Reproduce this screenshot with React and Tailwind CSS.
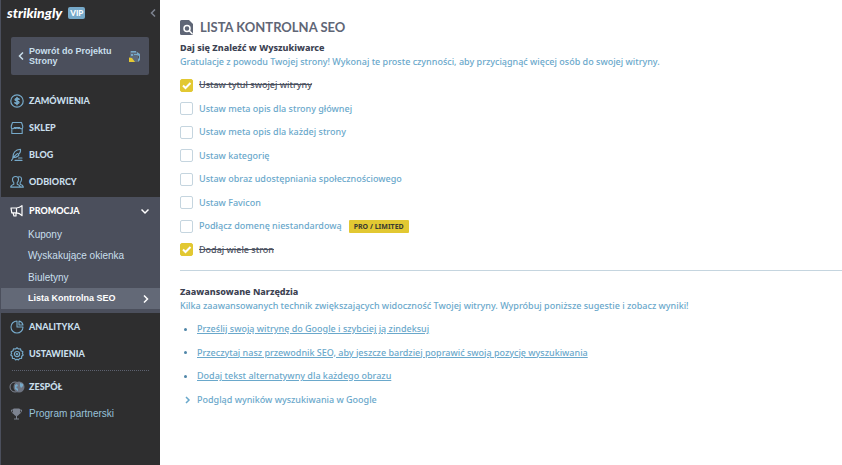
import React, { useState } from 'react';

const svgProps = {
  width: 14,
  height: 14,
  viewBox: '0 0 14 14',
  fill: 'none',
  stroke: 'currentColor',
  strokeWidth: 1.1,
  strokeLinecap: 'round',
  strokeLinejoin: 'round',
  'aria-hidden': true,
};

const icons = {
  orders: (
    <svg {...svgProps}>
      <circle cx="7" cy="7" r="6.2" strokeWidth="1.2" />
      <path d="M9 5.2C8.4 4.3 5.4 4.2 5.2 5.6 5 7.2 9 6.7 8.9 8.4 8.7 9.8 5.6 9.7 5 8.8M7 3.6v6.8" strokeWidth="1.7" />
    </svg>
  ),
  store: (
    <svg {...svgProps}>
      <path d="M2.5 1.5h9L12.7 5v1.5c0 .8-.7 1.3-1.5 1.3s-1.500-.5-1.500-1.300H4.300c0 .8-.7 1.300-1.500 1.300s-1.500-.5-1.500-1.300V5zM4.300 6.500c.6 1.300 2 1.300 2.700.2.700 1.100 2.100 1.100 2.700-.2M1.800 8v4.500h10.400V8" />
    </svg>
  ),
  blog: (
    <svg {...svgProps}>
      <path d="M1.500 12.500C2.500 10 4.500 7.500 7.500 5.500M2.800 9.800C2.800 5 5.500 1.800 10.500 1.300c.3 2.400-.4 4-2 5l.3 1.200C7 9.200 5 9.800 2.800 9.800zM5 12.400h7M8.500 10h3.500" />
    </svg>
  ),
  audience: (
    <svg {...svgProps}>
      <path d="M8.300 2c1.900-.9 3.500.4 3.200 2.600-.1 1.400-.7 2.300-1.300 2.800v1.800c1.900.6 3 1.200 3.200 2.900h-3M5.600 1.500c2 0 3 1.300 2.900 3.100-.1 1.500-.6 2.400-1.300 3v1.600c1.800.6 3 1.100 3.100 2.900H.7c.1-1.800 1.300-2.300 3.100-2.900V7.600c-.7-.6-1.200-1.500-1.300-3-.1-1.800 1.100-3.100 3.100-3.100z" />
    </svg>
  ),
  promotion: (
    <svg {...svgProps} strokeWidth="1.2">
      <path d="M1 4h5.500c2 0 4-.8 5.500-2.300v10C10.500 10 8.500 8.800 6.500 8.800H1.800zM6.500 4v4.800M3 8.800l1 3.200h2V8.800" />
    </svg>
  ),
  analytics: (
    <svg {...svgProps}>
      <path d="M7 1a6 6 0 1 0 6 6H7zM9 1v4h4A5 5 0 0 0 9 1z" />
    </svg>
  ),
  settings: (
    <svg {...svgProps} strokeWidth="1.2">
      <path d="M7 .8l1.500 1.200 2-.2.500 2 1.900.9-.5 1.800.8 1.500-1.500 1.300-.1 2-2 .2L8.400 13 7 12.300 5.600 13l-1.200-1.500-2-.2-.1-2L.8 8l.8-1.500-.5-1.800L3 3.800l.5-2 2 .2z" />
      <circle cx="7" cy="7.100" r="2.600" />
      <circle cx="7" cy="7.100" r=".5" />
    </svg>
  ),
};

const seoTasks = [
  { id: 'title', label: 'Ustaw tytuł swojej witryny', done: true },
  { id: 'meta-home', label: 'Ustaw meta opis dla strony głównej' },
  { id: 'meta-pages', label: 'Ustaw meta opis dla każdej strony' },
  { id: 'category', label: 'Ustaw kategorię' },
  { id: 'share-image', label: 'Ustaw obraz udostępniania społecznościowego' },
  { id: 'favicon', label: 'Ustaw Favicon' },
  { id: 'domain', label: 'Podłącz domenę niestandardową', badge: 'PRO / LIMITED' },
  { id: 'pages', label: 'Dodaj wiele stron', done: true },
];

const advancedLinks = [
  'Prześlij swoją witrynę do Google i szybciej ją zindeksuj',
  'Przeczytaj nasz przewodnik SEO, aby jeszcze bardziej poprawić swoją pozycję wyszukiwania',
  'Dodaj tekst alternatywny dla każdego obrazu',
];

function Chevron({ d, className }) {
  return (
    <svg className={className} width="8" height="8" viewBox="0 0 8 8" fill="none" stroke="currentColor" strokeWidth="1.5" aria-hidden="true">
      <path d={d} />
    </svg>
  );
}

function NavItem({ icon, children }) {
  return (
    <a href="#" className="flex h-[27px] items-center gap-[5px] pl-[9px] font-[Lato,sans-serif] text-[9px] font-black text-[#c9dfec]">
      <span className="text-[#76a9c9]">{icons[icon]}</span>
      {children}
    </a>
  );
}

function Sidebar() {
  return (
    <aside className="flex w-40 shrink-0 flex-col border-l border-[#4b4f5c] bg-[#2e2e2f] font-['Liberation_Sans',sans-serif] text-[10px]">
      <div className="flex h-[26px] items-center pl-[6px] pr-[3px]">
        <span className="font-[Lato,sans-serif] text-sm font-black italic text-white">strikingly</span>
        <span className="ml-[6px] rounded-[2px] bg-[#76a9c9] px-[2px] font-[Lato,sans-serif] text-[8px] font-black leading-[12px] text-white">VIP</span>
        <button type="button" aria-label="Zwiń menu" className="ml-auto text-[#7d8390]">
          <Chevron d="M6 0.500L2.500 4 6 7.500" />
        </button>
      </div>

      <a href="#" className="ml-[10px] mr-[11px] mt-[11px] flex h-[38px] items-center rounded-[2px] bg-[#4b4f5c] pl-[6px] pr-[8px] text-[9px] font-bold leading-[10px] text-[#c9dfec]">
        <Chevron d="M6 0.500L2.500 4 6 7.500" />
        <span className="ml-1 grow">Powrót do Projektu<br />Strony</span>
        <svg width="12" height="12" viewBox="0 0 12 12" aria-hidden="true">
          <path d="M1 1h6l2 2v9H1z" fill="#5d6b7c" />
          <path d="M2 1h5v1.500H2zM2 4h2v2H2zM5 4h3v1H5zM8 2l3 2v6l-2 2V9l1-1V6L8 5z" fill="#76a9c9" />
          <path d="M0 7.500l3 .5 3 4H0z" fill="#e5c933" />
        </svg>
      </a>

      <nav className="mt-3">
        <NavItem icon="orders">ZAMÓWIENIA</NavItem>
        <NavItem icon="store">SKLEP</NavItem>
        <NavItem icon="blog">BLOG</NavItem>
        <NavItem icon="audience">ODBIORCY</NavItem>
        <div className="mt-[2px] bg-[#4b4f5c] pb-1 text-[#c9dfec]">
          <button type="button" className="flex h-[27px] w-full items-center gap-[5px] pl-[9px] pr-[11px] font-[Lato,sans-serif] text-[9px] font-black text-white">
            {icons.promotion}
            PROMOCJA
            <Chevron className="ml-auto" d="M0.500 2.500L4 6 7.500 2.500" />
          </button>
          <a href="#" className="flex h-[21px] items-center pl-[27px]">Kupony</a>
          <a href="#" className="flex h-[21px] items-center pl-[27px]">Wyskakujące okienka</a>
          <a href="#" className="flex h-[22px] items-center pl-[27px]">Biuletyny</a>
          <a href="#" className="flex h-[21px] items-center justify-between bg-[#636977] pl-[27px] pr-[10px] text-[9px] font-bold text-white">
            Lista Kontrolna SEO
            <Chevron d="M2 0.500L5.500 4 2 7.500" />
          </a>
        </div>
        <NavItem icon="analytics">ANALITYKA</NavItem>
        <NavItem icon="settings">USTAWIENIA</NavItem>
        <hr className="mb-[2px] ml-[11px] mr-[11px] mt-[3px] border-dotted border-[#5d6270]" />
        <a href="#" className="flex h-[27px] items-center gap-1 pl-2 font-[Lato,sans-serif] text-[9px] font-black text-[#c9dfec]">
          <svg width="16" height="12" viewBox="0 0 16 12" aria-hidden="true">
            <circle cx="6" cy="6" r="5" fill="none" stroke="#7d8390" />
            <circle cx="10" cy="6" r="5.500" fill="#6d7380" />
            <path d="M6 4l2-1 1 2-2 1 2 2v2L6 8zM11 2l3 1v2l-2 2-1-2z" fill="#76a9c9" />
          </svg>
          ZESPÓŁ
        </a>
        <a href="#" className="flex h-[27px] items-center gap-[6px] pl-[9px] text-[#98c2da]">
          <svg width="13" height="12" viewBox="0 0 13 12" fill="none" stroke="#7d8390" aria-hidden="true">
            <path d="M3.500 1h6v3c0 2-1 3.500-3 3.500S3.500 6 3.500 4z" fill="#7d8390" />
            <path d="M3.500 2h-2c0 2 .5 3 2.500 3.500M9.500 2h2c0 2-.5 3-2.500 3.500M6.500 7.500V11M4 11h5" />
          </svg>
          Program partnerski
        </a>
      </nav>
    </aside>
  );
}

function TaskRow({ task, checked, onToggle }) {
  return (
    <li className="flex items-center odd:h-6 even:h-[23px]">
      <span className="relative flex size-[13px]">
        <input
          id={task.id}
          type="checkbox"
          checked={checked}
          onChange={onToggle}
          className="size-[13px] appearance-none rounded-[2px] border border-[#c5d5df] bg-white checked:border-[#e2c832] checked:bg-[#e2c832]"
        />
        {checked && (
          <svg className="pointer-events-none absolute inset-0" width="13" height="13" viewBox="0 0 13 13" fill="none" stroke="white" strokeWidth="2" aria-hidden="true">
            <path d="M3 6.500l2.500 2.500 5-5" />
          </svg>
        )}
      </span>
      <label htmlFor={task.id} className={checked ? 'ml-[6px] text-[#4b5160] line-through' : 'ml-[6px]'}>
        {task.label}
      </label>
      {task.badge && (
        <span className="ml-[7px] rounded-[1px] bg-[#e2c832] px-[5px] text-[7px] font-bold leading-[13px] text-[#3a3a30]">{task.badge}</span>
      )}
    </li>
  );
}

function App() {
  const [done, setDone] = useState(seoTasks.filter(t => t.done).map(t => t.id));

  const toggle = id => {
    setDone(done.includes(id) ? done.filter(d => d !== id) : [...done, id]);
  };

  return (
    <div className="flex min-h-screen bg-white">
      <Sidebar />
      <main className="min-w-0 grow pl-5 pt-[17px] font-['Noto_Sans','Open_Sans',sans-serif] text-[9px] font-medium leading-[14px] text-[#6aa8cb]">
        <h1 className="flex h-5 items-center gap-[7px] font-[Lato,sans-serif] text-[13px] font-bold text-[#5f6676]">
          <svg width="13" height="15" viewBox="0 0 13 15" aria-hidden="true">
            <path d="M1.500 0H9l4 4v9.500a1.500 1.500 0 0 1-1.500 1.500h-10A1.500 1.500 0 0 1 0 13.500v-12A1.500 1.500 0 0 1 1.500 0z" fill="#5f6676" />
            <circle cx="7" cy="8.500" r="3" fill="none" stroke="white" strokeWidth="1.500" />
            <path d="M9 10.500l3.500 3.500" stroke="white" strokeWidth="1.500" />
          </svg>
          LISTA KONTROLNA SEO
        </h1>

        <section className="mt-[4px]">
          <h2 className="font-extrabold text-[#3c4252]">Daj się Znaleźć w Wyszukiwarce</h2>
          <p>Gratulacje z powodu Twojej strony! Wykonaj te proste czynności, aby przyciągnąć więcej osób do swojej witryny.</p>
          <ul className="mt-1">
            {seoTasks.map(task => (
              <TaskRow key={task.id} task={task} checked={done.includes(task.id)} onToggle={() => toggle(task.id)} />
            ))}
          </ul>
        </section>

        <section className="mt-[9px] border-t border-[#c5d5df] pt-[14px]">
          <h2 className="font-extrabold text-[#3c4252]">Zaawansowane Narzędzia</h2>
          <p>Kilka zaawansowanych technik zwiększających widoczność Twojej witryny. Wypróbuj poniższe sugestie i zobacz wyniki!</p>
          <ul className="mt-1">
            {advancedLinks.map(link => (
              <li key={link} className="flex items-center odd:h-6 even:h-[23px]">
                <span className="ml-1 mr-[10px] size-[3px] rounded-full bg-[#4f86a8]" />
                <a href="#" className="underline">{link}</a>
              </li>
            ))}
            <li className="flex items-center odd:h-6 even:h-[23px]">
              <button type="button" className="flex items-center gap-[5px] pl-1">
                <Chevron d="M2 1L5 4 2 7" />
                Podgląd wyników wyszukiwania w Google
              </button>
            </li>
          </ul>
        </section>
      </main>
    </div>
  );
}

export default App;
